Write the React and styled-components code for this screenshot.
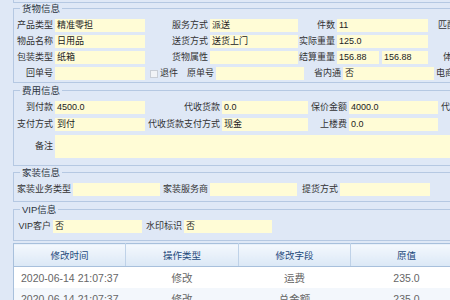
import React from "react";
import styled, { createGlobalStyle } from "styled-components";

const Global = createGlobalStyle`
  body {
    margin: 0;
    background: #dfe8f6;
    font-family: "Liberation Sans", "Noto Sans CJK SC", sans-serif;
    font-size: 9px;
    color: #333;
  }
`;

const Page = styled.div`
  width: 450px;
  height: 300px;
  overflow: hidden;
  padding-left: 13px;
  box-sizing: border-box;
`;

const TopEdge = styled.div`
  height: 2px;
  width: 520px;
  border-left: 1px solid #b5c8e2;
  border-bottom: 1px solid #b5c8e2;
`;

const Set = styled.fieldset`
  width: 520px;
  margin: ${p => p.$mt || 0}px 0 0 0;
  padding: 5px 0 ${p => p.$pb || 3}px 0;
  border: 1px solid #b5c8e2;
  box-sizing: border-box;
  min-width: 0;
  display: flex;
  flex-direction: column;
  gap: ${p => p.$gap || 3}px;
`;

const Legend = styled.legend`
  margin-left: 6px;
  padding: 0 2px;
  font-size: 9.5px;
  line-height: 11px;
  color: #2b3440;
`;

const Row = styled.div`
  display: flex;
  align-items: center;
  height: ${p => p.$h || 13}px;
  line-height: 13px;
`;

const Label = styled.span`
  flex: none;
  width: ${p => p.$w}px;
  box-sizing: border-box;
  text-align: ${p => p.$left ? "left" : "right"};
  padding-right: 2px;
  padding-left: ${p => p.$pl || 0}px;
  white-space: nowrap;
  overflow: hidden;
  color: #333;
`;

const Input = styled.div`
  flex: none;
  width: ${p => p.$w}px;
  height: ${p => p.$h || 13}px;
  margin-right: ${p => p.$mr || 0}px;
  background: #fffcd6;
  padding-left: 2px;
  box-sizing: border-box;
  line-height: 13px;
  white-space: nowrap;
  overflow: hidden;
  color: #222;
`;

const Check = styled.span`
  flex: none;
  width: 8px;
  height: 8px;
  margin: 0 2px 0 5px;
  border: 1px solid #c9ced6;
  background: #f1f3f6;
  box-sizing: border-box;
`;

const Inline = styled.span`
  flex: none;
  white-space: nowrap;
  margin-right: ${p => p.$mr || 0}px;
`;

const Grid = styled.table`
  margin-top: 2px;
  width: 449px;
  border-collapse: collapse;
  table-layout: fixed;
  background: #fff;
  border-left: 1px solid #a8c0dc;
  border-top: 1px solid #a8c0dc;
`;

const Head = styled.th`
  height: 22px;
  padding: 0;
  font-weight: normal;
  font-size: 9.5px;
  color: #244a7c;
  background: linear-gradient(#f4f8fd, #dbe8f6);
  border-right: 1px solid #bfd2e8;
  border-bottom: 1px solid #a8c0dc;
  text-align: center;
`;

const Cell = styled.td`
  height: 21px;
  padding: 0;
  text-align: center;
  font-size: 10.5px;
  color: #666;
  background: ${p => p.$alt ? "#f3f7fc" : "#fff"};
`;

const rows = [
  ["2020-06-14 21:07:37", "修改", "运费", "235.0"],
  ["2020-06-14 21:07:37", "修改", "总金额", "235.0"],
];

export default function App() {
  return (
    <Page>
      <Global />
      <TopEdge />
      <Set $pb={2}>
        <Legend>货物信息</Legend>
        <Row>
          <Label $w={41}>产品类型</Label>
          <Input $w={90}>精准零担</Input>
          <Label $w={65}>服务方式</Label>
          <Input $w={88}>派送</Input>
          <Label $w={39}>件数</Label>
          <Input $w={91}>11</Input>
          <Label $w={70} $left $pl={10}>匹配站点</Label>
        </Row>
        <Row>
          <Label $w={41}>物品名称</Label>
          <Input $w={90}>日用品</Input>
          <Label $w={65}>送货方式</Label>
          <Input $w={88}>送货上门</Input>
          <Label $w={39}>实际重量</Label>
          <Input $w={91}>125.0</Input>
        </Row>
        <Row>
          <Label $w={41}>包装类型</Label>
          <Input $w={90}>纸箱</Input>
          <Label $w={65}>货物属性</Label>
          <Input $w={88} />
          <Label $w={39}>结算重量</Label>
          <Input $w={42} $mr={3}>156.88</Input>
          <Input $w={46}>156.88</Input>
          <Label $w={70} $left $pl={15}>体积</Label>
        </Row>
        <Row>
          <Label $w={41}>回单号</Label>
          <Input $w={90} />
          <Check />
          <Inline $mr={4}>退件</Inline>
          <Label $w={34}>原单号</Label>
          <Input $w={88} />
          <Label $w={39}>省内通</Label>
          <Input $w={91}>否</Input>
          <Label $w={70} $left $pl={2}>电商订单号</Label>
        </Row>
      </Set>
      <Set $mt={2} $pb={7} $gap={4}>
        <Legend>费用信息</Legend>
        <Row>
          <Label $w={41}>到付款</Label>
          <Input $w={90}>4500.0</Input>
          <Label $w={77}>代收货款</Label>
          <Input $w={86}>0.0</Input>
          <Label $w={41}>保价金额</Label>
          <Input $w={89}>4000.0</Input>
          <Label $w={70} $left $pl={3}>代收手续费</Label>
        </Row>
        <Row>
          <Label $w={41}>支付方式</Label>
          <Input $w={90}>到付</Input>
          <Label $w={77}>代收货款支付方式</Label>
          <Input $w={86}>现金</Input>
          <Label $w={41}>上楼费</Label>
          <Input $w={89}>0.0</Input>
        </Row>
        <Row $h={23}>
          <Label $w={41}>备注</Label>
          <Input $w={460} $h={23} />
        </Row>
      </Set>
      <Set $mt={1} $pb={5}>
        <Legend>家装信息</Legend>
        <Row>
          <Label $w={59}>家装业务类型</Label>
          <Input $w={87} />
          <Label $w={50}>家装服务商</Label>
          <Input $w={87} />
          <Label $w={43}>提货方式</Label>
          <Input $w={90} />
        </Row>
      </Set>
      <Set $mt={2} $pb={7}>
        <Legend>VIP信息</Legend>
        <Row>
          <Label $w={39}>VIP客户</Label>
          <Input $w={89}>否</Input>
          <Label $w={42}>水印标识</Label>
          <Input $w={88}>否</Input>
        </Row>
      </Set>
      <Grid>
        <colgroup>
          <col width="112" />
          <col width="113" />
          <col width="112" />
          <col width="112" />
        </colgroup>
        <thead>
          <tr>
            <Head>修改时间</Head>
            <Head>操作类型</Head>
            <Head>修改字段</Head>
            <Head>原值</Head>
          </tr>
        </thead>
        <tbody>
          {rows.map((r, i) => (
            <tr key={i}>
              {r.map((c, j) => (
                <Cell key={j} $alt={i % 2 === 1}>{c}</Cell>
              ))}
            </tr>
          ))}
        </tbody>
      </Grid>
    </Page>
  );
}
